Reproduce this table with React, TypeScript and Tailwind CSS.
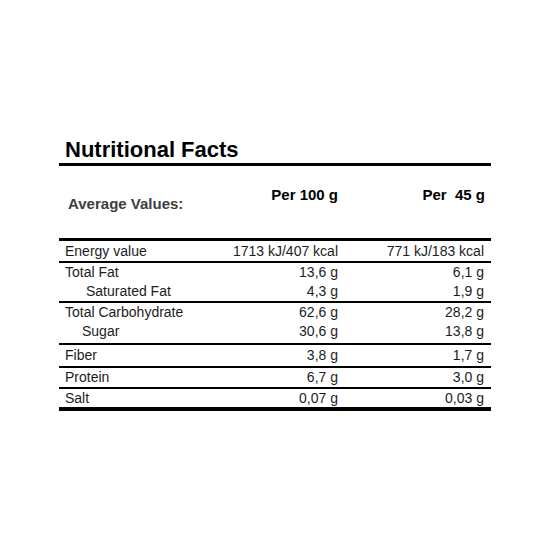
type Row = {
  label: string
  per100: string
  perServing: string
  indent?: string
  h: string
}

type Group = {
  rows: Row[]
  extra?: string
  last?: boolean
}

const groups: Group[] = [
  { rows: [{ label: 'Energy value', per100: '1713 kJ/407 kcal', perServing: '771 kJ/183 kcal', h: 'h-[20px]' }] },
  {
    rows: [
      { label: 'Total Fat', per100: '13,6 g', perServing: '6,1 g', h: 'h-[19px]' },
      { label: 'Saturated Fat', per100: '4,3 g', perServing: '1,9 g', indent: 'pl-[21px]', h: 'h-[19px]' },
    ],
  },
  {
    rows: [
      { label: 'Total Carbohydrate', per100: '62,6 g', perServing: '28,2 g', h: 'h-[19px]' },
      { label: 'Sugar', per100: '30,6 g', perServing: '13,8 g', indent: 'pl-[17px]', h: 'h-[19px]' },
    ],
    extra: 'pb-[2px]',
  },
  { rows: [{ label: 'Fiber', per100: '3,8 g', perServing: '1,7 g', h: 'h-[21px]' }] },
  { rows: [{ label: 'Protein', per100: '6,7 g', perServing: '3,0 g', h: 'h-[19px]' }] },
  { rows: [{ label: 'Salt', per100: '0,07 g', perServing: '0,03 g', h: 'h-[18px]' }], last: true },
]

function App() {
  return (
    <div className="h-[550px] w-[550px] bg-white font-['Liberation_Sans',Arial,sans-serif]">
      <div className="ml-[59px] w-[432px] pt-[137px]">
        <div className="border-b-[3px] border-black pl-[6px]">
          <h1 className="h-[26px] text-[22px] leading-[26px] font-bold text-black">Nutritional Facts</h1>
        </div>

        <div className="flex h-[75px] border-b-[3px] border-black pr-[6px] text-[15px] leading-[18px] font-bold">
          <div className="flex-1 pt-[29px] pl-[9px] text-[#3d3d3d]">Average Values:</div>
          <div className="w-[140px] pt-[20px] text-right text-black">Per 100 g</div>
          <div className="w-[147px] pt-[20px] text-right whitespace-pre text-black">Per  45 g</div>
        </div>

        {groups.map((g, i) => (
          <div
            key={i}
            className={`${g.last ? 'border-b-4' : 'border-b-2'} border-black ${g.extra ?? ''} text-[14px] text-[#1c1c1c]`}
          >
            {g.rows.map((r) => (
              <div key={r.label} className={`flex items-center ${r.h} pr-[7px] pl-[6px]`}>
                <div className={`flex-1 ${r.indent ?? ''}`}>{r.label}</div>
                <div className="w-[140px] text-right">{r.per100}</div>
                <div className="w-[146px] text-right">{r.perServing}</div>
              </div>
            ))}
          </div>
        ))}
      </div>
    </div>
  )
}

export default App
